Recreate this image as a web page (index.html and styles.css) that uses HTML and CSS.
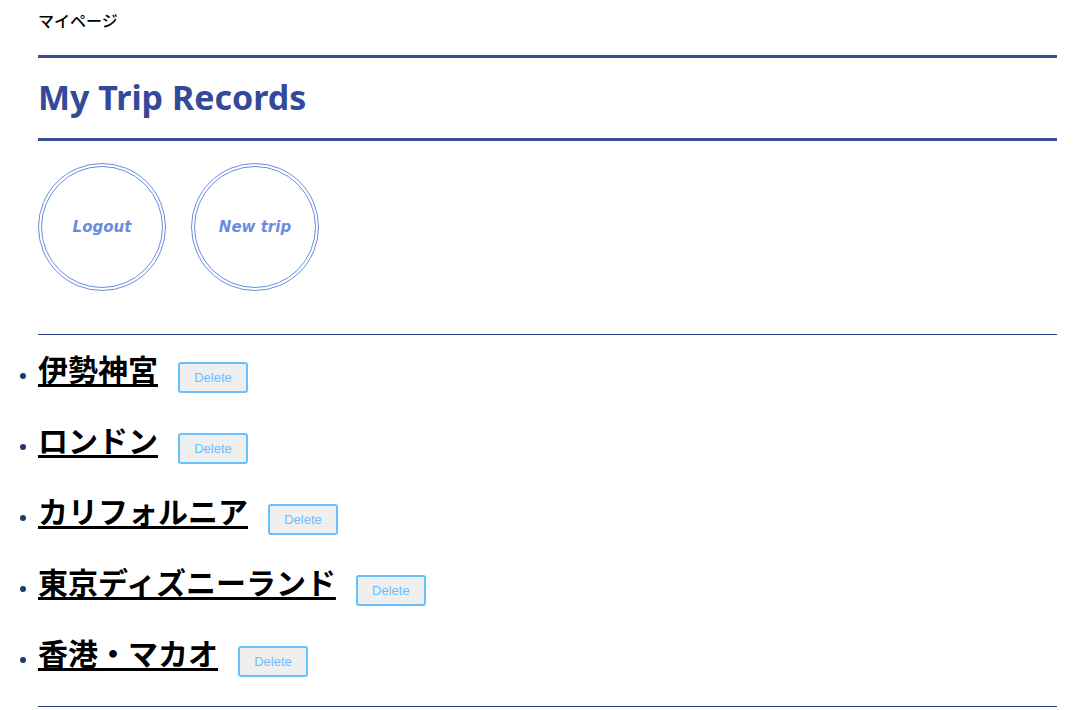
FILE: index.html
```html
<!DOCTYPE html>
<html lang="ja">
<head>
<meta charset="utf-8">
<title>マイページ</title>
<link rel="stylesheet" href="styles.css">
</head>
<body>
<div class="page">
  <div class="crumb">マイページ</div>
  <header class="title-bar">
    <h1 class="title">My Trip Records</h1>
  </header>
  <nav class="actions">
    <a class="circle-btn" href="#">Logout</a>
    <a class="circle-btn" href="#">New trip</a>
  </nav>
  <ul class="trips">
    <li class="trip"><a class="trip-name" href="#">伊勢神宮</a><button class="del">Delete</button></li>
    <li class="trip"><a class="trip-name" href="#">ロンドン</a><button class="del">Delete</button></li>
    <li class="trip"><a class="trip-name" href="#">カリフォルニア</a><button class="del">Delete</button></li>
    <li class="trip"><a class="trip-name" href="#">東京ディズニーランド</a><button class="del">Delete</button></li>
    <li class="trip"><a class="trip-name" href="#">香港・マカオ</a><button class="del">Delete</button></li>
  </ul>
</div>
</body>
</html>
```
FILE: styles.css
```css
html, body {
  margin: 0;
  padding: 0;
  background: #fff;
}
body {
  font-family: "Noto Sans", "Noto Sans CJK JP", sans-serif;
  color: #000;
}
.page {
  padding: 0 33px 0 38px;
}
.crumb {
  font-family: "Noto Sans CJK JP", sans-serif;
  font-size: 16px;
  font-weight: 500;
  line-height: 20px;
  padding-top: 10px;
  height: 45px;
}
.title-bar {
  border-top: 3px solid #3a4f96;
  border-bottom: 3px solid #3a4f96;
  height: 80px;
  display: flex;
  align-items: center;
}
.title {
  margin: 0 0 3px;
  font-family: "Noto Sans", sans-serif;
  font-size: 34px;
  font-weight: bold;
  color: #34499a;
  line-height: 40px;
}
.actions {
  display: flex;
  gap: 25px;
  padding: 22px 0 43px;
  border-bottom: 1px solid #2a3f7e;
}
.circle-btn {
  box-sizing: border-box;
  width: 128px;
  height: 128px;
  border-radius: 50%;
  border: 4px double #6a8ce0;
  display: flex;
  align-items: center;
  justify-content: center;
  font-family: "DejaVu Sans", sans-serif;
  font-style: italic;
  font-weight: bold;
  font-size: 15px;
  color: #6a8ce0;
  text-decoration: none;
}
.trips {
  margin: 0;
  padding: 1px 0 15px;
  list-style: disc outside;
  border-bottom: 1px solid #2a3f7e;
  color: #23386e;
}
.trip {
  height: 71px;
  line-height: 64px;
}
.trip-name {
  font-family: "Noto Sans CJK JP", sans-serif;
  font-size: 30px;
  font-weight: bold;
  color: #000;
  text-decoration: underline;
  text-decoration-thickness: 3px;
  text-underline-offset: 3px;
}
.del {
  box-sizing: border-box;
  width: 70px;
  height: 31px;
  margin-left: 20px;
  vertical-align: -1px;
  background: #efefef;
  border: 2px solid #66c2ff;
  border-radius: 3px;
  font-family: "Liberation Sans", Arial, sans-serif;
  font-size: 13px;
  color: #6ebcff;
  padding: 0;
}
```
